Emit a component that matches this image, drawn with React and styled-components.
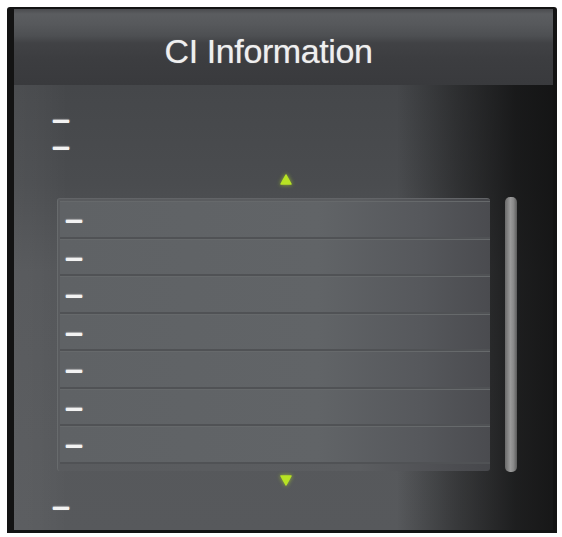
import styled, { createGlobalStyle } from 'styled-components';

const GlobalStyle = createGlobalStyle`
    html, body {
        margin: 0;
        padding: 0;
        background: #ffffff;
    }
    body {
        font-family: "Liberation Sans", Arial, sans-serif;
    }
`;

const Page = styled.div`
    width: 562px;
    height: 537px;
    padding: 7px 5px 4px 7px;
    box-sizing: border-box;
`;

const Frame = styled.div`
    height: 100%;
    display: flex;
    flex-direction: column;
    box-sizing: border-box;
    border-style: solid;
    border-color: #131313;
    border-width: 2px 4px 3px 7px;
    border-radius: 3px 3px 0 0;
    overflow: hidden;
`;

const Header = styled.div`
    height: 76px;
    flex-shrink: 0;
    display: flex;
    align-items: center;
    justify-content: center;
    background: linear-gradient(to bottom, #4a4b4e 0px, #5b5d60 5px, #56585b 16px, #4d4f52 27px, #414245 34px, #3c3d40 50px, #393a3d 76px);
`;

const Title = styled.h1`
    margin: 0;
    padding: 8px 30px 0 0;
    font-family: "Liberation Sans", Arial, sans-serif;
    font-weight: normal;
    font-size: 34px;
    color: #efefef;
    letter-spacing: -0.4px;
    text-shadow: 0 0 1px rgba(255, 255, 255, 0.5);
`;

const Body = styled.div`
    flex: 1;
    display: flex;
    flex-direction: column;
    padding: 21px 0 0 38px;
    background:
        linear-gradient(to right, transparent 0%, transparent 71%, rgba(10, 10, 10, 0.4) 82%, rgba(8, 8, 8, 0.72) 93%, rgba(12, 12, 12, 0.85) 100%),
        linear-gradient(to right, rgba(255, 255, 255, 0.035) 0%, rgba(255, 255, 255, 0.025) 5%, transparent 10%),
        linear-gradient(to bottom, #45474a 0%, #4a4c4f 22%, #545659 42%, #57595c 100%);
`;

const InfoLine = styled.div`
    height: 27px;
    display: flex;
    align-items: center;
`;

const Dash = styled.span`
    display: inline-block;
    font-family: "DejaVu Sans", sans-serif;
    font-weight: bold;
    font-size: 18px;
    line-height: 8px;
    height: 8px;
    color: #f2f2f2;
    text-shadow: 0 1px 0 #f2f2f2, 0 0 2px rgba(255, 255, 255, 0.6);
`;

const Arrow = styled.div`
    align-self: flex-start;
    margin: ${(p) => p.$top}px 0 0 228px;
    width: 12px;
    height: 12px;
    display: flex;
    filter: drop-shadow(0 0 2px rgba(180, 230, 30, 0.7));
`;

const ListArea = styled.div`
    display: flex;
    align-items: flex-start;
    margin: 12px 0 0 5px;
    gap: 15px;
`;

const List = styled.div`
    width: 433px;
    height: 273px;
    box-sizing: border-box;
    padding: 2px 0 0 2px;
    background: linear-gradient(to right, #595b5e 0%, #5b5d60 70%, #4d4e52 90%, #46474b 100%);
    border-left: 1px solid #686b6d;
    border-top: 1px solid #626467;
    border-radius: 3px;
`;

const Row = styled.div`
    height: 37.5px;
    box-sizing: border-box;
    display: flex;
    align-items: center;
    padding: 2px 0 0 5px;
    border-bottom: 2px solid #505255;
    border-top: 1px solid #66696b;
    background: linear-gradient(to right, #5f6265 0%, #616467 60%, #56585c 84%, #4a4b4f 100%);
`;

const ScrollBar = styled.div`
    width: 12px;
    height: 275px;
    margin-top: -1px;
    border-radius: 5px;
    background: linear-gradient(to right, #6a6a6a 0%, #9a9a9a 45%, #8a8a8a 70%, #5c5c5c 100%);
`;

const BottomLine = styled(InfoLine)`
    margin-top: 7px;
`;

function Triangle({ down }) {
    return (
        <svg width="12" height="12" viewBox="0 0 12 12">
            <path
                d={down ? 'M1 2 L11 2 L6 11 Z' : 'M6 1 L11 10 L1 10 Z'}
                fill="#b8e424"
                stroke="#b8e424"
                strokeWidth="1.5"
                strokeLinejoin="round"
            />
        </svg>
    );
}

const rows = ['—', '—', '—', '—', '—', '—', '—'];

export default function App() {
    return (
        <>
            <GlobalStyle />
            <Page>
                <Frame>
                    <Header>
                        <Title>CI Information</Title>
                    </Header>
                    <Body>
                        <InfoLine>
                            <Dash>—</Dash>
                        </InfoLine>
                        <InfoLine>
                            <Dash>—</Dash>
                        </InfoLine>
                        <Arrow $top={14}>
                            <Triangle />
                        </Arrow>
                        <ListArea>
                            <List>
                                {rows.map((value, i) => (
                                    <Row key={i}>
                                        <Dash>{value}</Dash>
                                    </Row>
                                ))}
                            </List>
                            <ScrollBar />
                        </ListArea>
                        <Arrow $top={2}>
                            <Triangle down />
                        </Arrow>
                        <BottomLine>
                            <Dash>—</Dash>
                        </BottomLine>
                    </Body>
                </Frame>
            </Page>
        </>
    );
}
